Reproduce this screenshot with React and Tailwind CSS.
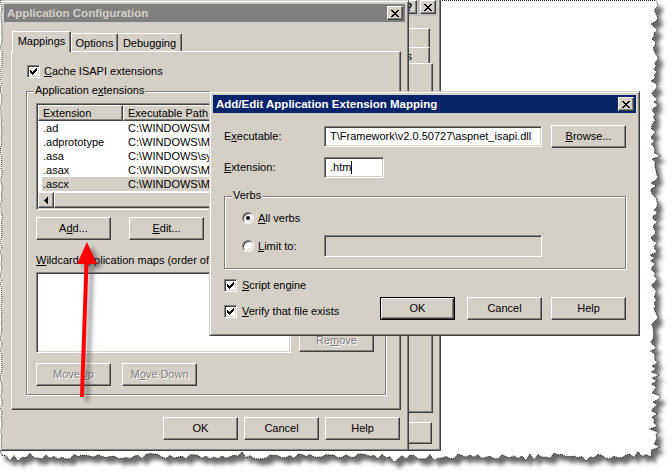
import React from "react";

// classic win2000 bevels
const raised =
  "border border-t-white border-l-white border-r-[#404040] border-b-[#404040] shadow-[inset_-1px_-1px_0_#808080]";
const sunken =
  "border border-t-[#808080] border-l-[#808080] border-r-white border-b-white shadow-[inset_1px_1px_0_#404040,inset_-1px_-1px_0_#D4D0C8]";
const etched = "border border-[#808080] shadow-[inset_1px_1px_0_#fff,1px_1px_0_#fff]";
const frame =
  "border border-t-[#D4D0C8] border-l-[#D4D0C8] border-r-[#404040] border-b-[#404040] shadow-[inset_1px_1px_0_#fff,inset_-1px_-1px_0_#808080] p-[3px]";
const greyed = "text-[#808080] [text-shadow:1px_1px_0_#fff]";

function makeRng(seed) {
  let s = seed;
  return () => {
    s = (s * 16807) % 2147483647;
    return s / 2147483647;
  };
}

const rnd = makeRng(4242);
const pts = [[0, 0.5], [656, 0.5]];
for (let y = 3; y < 452; y += 3) {
  const spike = rnd() < 0.15 ? (rnd() - 0.5) * 9 : 0;
  pts.push([651 + rnd() * 7 + spike, y]);
}
pts.push([651, 457]);
for (let x = 646; x > 2; x -= 4) {
  const spike = rnd() < 0.15 ? (rnd() - 0.5) * 8 : 0;
  pts.push([x, 454 + rnd() * 5 + spike]);
}
pts.push([0, 455]);
const PAPER = "M" + pts.map((p) => p[0].toFixed(1) + "," + p[1].toFixed(1)).join(" L") + " Z";

const leftPts = [];
for (let y = 0; y <= 456; y += 4) leftPts.push([0.5 + rnd() * 1.8, y]);
const LEFT_EDGE = "M" + leftPts.map((p) => p[0].toFixed(1) + "," + p[1]).join(" L");
const LEFT_FILL = LEFT_EDGE + " L-2,456 L-2,0 Z";

function TornPaper() {
  return (
    <svg className="absolute left-0 top-0" width="671" height="472">
      <defs>
        <filter id="pblur" x="-5%" y="-5%" width="110%" height="110%">
          <feGaussianBlur stdDeviation="2.2" />
        </filter>
      </defs>
      <path d={PAPER} transform="translate(5,6)" fill="#6a6a6a" filter="url(#pblur)" />
      <path d={PAPER} fill="#fff" stroke="#000" strokeWidth="0.9" strokeDasharray="1 1" />
    </svg>
  );
}

function CloseGlyph() {
  const segs = [
    [0, 0, 2], [6, 0, 2],
    [1, 1, 2], [5, 1, 2],
    [2, 2, 4],
    [3, 3, 2],
    [2, 4, 4],
    [1, 5, 2], [5, 5, 2],
    [0, 6, 2], [6, 6, 2],
  ];
  return (
    <svg width="8" height="7" viewBox="0 0 8 7" shapeRendering="crispEdges">
      {segs.map(([x, y, w], i) => (
        <rect key={i} x={x} y={y} width={w} height="1" fill="#000" />
      ))}
    </svg>
  );
}

function TitleButton({ children }) {
  return (
    <div className={`w-[16px] h-[14px] shrink-0 bg-[#D4D0C8] ${raised} flex items-center justify-center`}>
      {children}
    </div>
  );
}

function TitleBar({ title, active }) {
  return (
    <div
      className={`h-[18px] flex items-center pl-[3px] pr-[2px] ${
        active ? "bg-[#0A246A] text-white" : "bg-[#808080] text-[#D4D0C8]"
      }`}
    >
      <span className="flex-1 font-bold text-[11.5px] whitespace-nowrap">{title}</span>
      <TitleButton>
        <CloseGlyph />
      </TitleButton>
    </div>
  );
}

function Button({ children, disabled, def, w = "w-[75px]", h = "h-[23px]" }) {
  const face = (
    <div
      className={`${def ? "w-full h-full" : `${w} ${h}`} shrink-0 bg-[#D4D0C8] ${raised} flex items-center justify-center whitespace-nowrap ${
        disabled ? greyed : ""
      }`}
    >
      {children}
    </div>
  );
  if (def) return <div className={`${w} ${h} shrink-0 border border-black`}>{face}</div>;
  return face;
}

function Check() {
  const ys = [2, 3, 4, 3, 2, 1, 0];
  return (
    <div className={`w-[13px] h-[13px] shrink-0 bg-white ${sunken} flex items-center justify-center`}>
      <svg width="7" height="7" viewBox="0 0 7 7" shapeRendering="crispEdges">
        {ys.map((y, i) => (
          <rect key={i} x={i} y={y} width="1" height="3" fill="#000" />
        ))}
      </svg>
    </div>
  );
}

function Radio({ on }) {
  return (
    <div className="w-[12px] h-[12px] shrink-0 rounded-full bg-white border border-t-[#808080] border-l-[#808080] border-r-white border-b-white shadow-[inset_1px_1px_0_#404040,inset_-1px_-1px_0_#D4D0C8] flex items-center justify-center">
      {on && <div className="w-[4px] h-[4px] rounded-full bg-black" />}
    </div>
  );
}

function GroupLabel({ children, left = "left-[7px]" }) {
  return (
    <span className={`absolute ${left} top-[-8px] px-[1px] bg-[#D4D0C8] whitespace-nowrap`}>{children}</span>
  );
}

const rows = [
  [".ad", "C:\\WINDOWS\\Microsoft.NET\\Framework\\v2.0.50727\\aspnet_isapi.dll"],
  [".adprototype", "C:\\WINDOWS\\Microsoft.NET\\Framework\\v2.0.50727\\aspnet_isapi.dll"],
  [".asa", "C:\\WINDOWS\\system32\\inetsrv\\asp.dll"],
  [".asax", "C:\\WINDOWS\\Microsoft.NET\\Framework\\v2.0.50727\\aspnet_isapi.dll"],
  [".ascx", "C:\\WINDOWS\\Microsoft.NET\\Framework\\v2.0.50727\\aspnet_isapi.dll"],
];

function BackWindow() {
  return (
    <div className={`absolute left-[340px] top-[-6px] w-[101px] h-[457px] bg-[#D4D0C8] ${frame} flex flex-col`}>
      <div className="h-[18px] bg-[#C0C0C0] flex items-center justify-end gap-[3px] pr-[1px]">
        <TitleButton>
          <span className="font-bold leading-none">?</span>
        </TitleButton>
        <TitleButton>
          <CloseGlyph />
        </TitleButton>
      </div>
      <div className="flex flex-col items-end pt-[12px]">
        <div className="mr-[7px] w-[60px] h-[19px] border-t border-r border-t-white border-r-[#404040] shadow-[inset_-1px_0_0_#808080]" />
        <div className="mr-[7px] w-[60px] h-[16px] border-t border-r border-t-white border-r-[#404040] shadow-[inset_-1px_0_0_#808080] text-right pr-[17px] pt-[2px]">
          s
        </div>
        <div className="mr-[4px] w-[80px] h-[350px] border-t border-r border-b border-t-white border-r-[#404040] border-b-[#404040] shadow-[inset_-1px_-1px_0_#808080]" />
        <div className="mt-[9px] mr-[5px]">
          <Button h="h-[22px]" />
        </div>
      </div>
    </div>
  );
}

function AppConfig() {
  return (
    <div className={`absolute left-0 top-0 w-[409px] h-[451px] bg-[#D4D0C8] ${frame} flex flex-col`}>
      <TitleBar title="Application Configuration" />
      <div className="pl-[7px] pt-[9px] flex flex-col">
        {/* tabs */}
        <div className="flex items-end h-[20px]">
          <div className="relative z-10 ml-[1px] -mb-px w-[59px] h-[21px] bg-[#D4D0C8] rounded-t-[2px] border-t border-l border-r border-t-white border-l-white border-r-[#404040] shadow-[inset_-1px_0_0_#808080] flex justify-center pt-[3px]">
            Mappings
          </div>
          <div className="w-[47px] h-[18px] rounded-t-[2px] border-t border-l border-r border-t-white border-l-white border-r-[#404040] shadow-[inset_-1px_0_0_#808080] flex justify-center pt-[3px]">
            Options
          </div>
          <div className="w-[64px] h-[18px] rounded-t-[2px] border-t border-r border-t-white border-r-[#404040] shadow-[inset_-1px_0_0_#808080] flex justify-center pt-[3px]">
            Debugging
          </div>
        </div>

        {/* tab panel */}
        <div className={`w-[390px] h-[359px] ${raised} pt-[13px] pl-[14px] flex flex-col`}>
          <div className="ml-[1px] flex items-center h-[13px]">
            <Check />
            <span className="ml-[4px] whitespace-nowrap">
              <u>C</u>ache ISAPI extensions
            </span>
          </div>

          <div className={`relative mt-[13px] w-[360px] h-[304px] ${etched} pl-[9px] pt-[11px] flex flex-col`}>
            <GroupLabel>
              Application e<u>x</u>tensions
            </GroupLabel>

            {/* list view */}
            <div className={`w-[340px] h-[107px] bg-white ${sunken} p-px flex flex-col overflow-hidden`}>
              <div className="flex h-[16px] shrink-0">
                <div className={`w-[85px] ${raised} bg-[#D4D0C8] pl-[4px] flex items-center`}>Extension</div>
                <div className={`flex-1 ${raised} bg-[#D4D0C8] pl-[4px] flex items-center whitespace-nowrap`}>
                  Executable Path
                </div>
              </div>
              {rows.map(([ext, path], i) => (
                <div key={ext} className="h-[14px] pl-[4px] flex">
                  <div className={`flex-1 flex items-center ${i === 4 ? "bg-[#D4D0C8]" : ""}`}>
                    <span className="w-[81px] pl-[1px] whitespace-nowrap">{ext}</span>
                    <span className="pl-[5px] whitespace-nowrap">{path}</span>
                  </div>
                </div>
              ))}
              <div className="flex-1" />
              <div className="h-[16px] flex shrink-0 bg-[#D4D0C8]">
                <div className={`w-[16px] h-[16px] ${raised} bg-[#D4D0C8] flex items-center justify-center`}>
                  <svg width="4" height="7" viewBox="0 0 4 7" shapeRendering="crispEdges">
                    <rect x="0" y="3" width="1" height="1" fill="#000" />
                    <rect x="1" y="2" width="1" height="3" fill="#000" />
                    <rect x="2" y="1" width="1" height="5" fill="#000" />
                    <rect x="3" y="0" width="1" height="7" fill="#000" />
                  </svg>
                </div>
                <div className={`w-[220px] h-[16px] ${raised} bg-[#D4D0C8]`} />
              </div>
            </div>

            <div className="mt-[7px] flex gap-[18px]">
              <Button>
                A<u>d</u>d...
              </Button>
              <Button>
                <u>E</u>dit...
              </Button>
              <Button>Remove</Button>
            </div>

            <div className="mt-[14px] whitespace-nowrap">
              <u>W</u>ildcard application maps (order of implementation):
            </div>

            <div className="mt-[5px] flex items-end">
              <div className={`w-[255px] h-[81px] bg-white ${sunken}`} />
              <div className="ml-[8px] mb-px">
                <Button disabled>
                  Re<u>m</u>ove
                </Button>
              </div>
            </div>

            <div className="mt-[10px] flex gap-[11px]">
              <Button disabled>
                Move <u>U</u>p
              </Button>
              <Button disabled>
                M<u>o</u>ve Down
              </Button>
            </div>
          </div>
        </div>

        <div className="w-[390px] mt-[7px] pr-[1px] flex justify-end gap-[6px]">
          <Button>OK</Button>
          <Button>Cancel</Button>
          <Button>Help</Button>
        </div>
      </div>
    </div>
  );
}

function MappingDialog() {
  return (
    <div className={`absolute left-[209px] top-[91px] w-[431px] h-[245px] bg-[#D4D0C8] ${frame} flex flex-col`}>
      <TitleBar title="Add/Edit Application Extension Mapping" active />
      <div className="pl-[11px] pt-[12px] flex flex-col">
        <div className="h-[23px] flex items-center">
          <span className="w-[100px]">
            E<u>x</u>ecutable:
          </span>
          <div className={`w-[218px] h-[21px] bg-white ${sunken} pl-[5px] flex items-center whitespace-nowrap overflow-hidden`}>
            T\Framework\v2.0.50727\aspnet_isapi.dll
          </div>
          <div className="ml-[9px]">
            <Button>
              <u>B</u>rowse...
            </Button>
          </div>
        </div>

        <div className="mt-[8px] h-[23px] flex items-center">
          <span className="w-[100px]">
            <u>E</u>xtension:
          </span>
          <div className={`w-[60px] h-[21px] bg-white ${sunken} pl-[5px] flex items-center`}>
            .htm
            <span className="inline-block w-px h-[13px] bg-black" />
          </div>
        </div>

        <div className={`relative mt-[17px] w-[402px] h-[73px] ${etched} pl-[17px] pt-[10px] flex flex-col`}>
          <GroupLabel>Verbs</GroupLabel>
          <div className="h-[22px] flex items-center">
            <Radio on />
            <span className="ml-[4px]">
              <u>A</u>ll verbs
            </span>
          </div>
          <div className="mt-[6px] h-[22px] flex items-center">
            <Radio />
            <span className="ml-[4px] w-[66px]">
              <u>L</u>imit to:
            </span>
            <div className={`w-[218px] h-[22px] bg-[#D4D0C8] ${sunken}`} />
          </div>
        </div>

        <div className="mt-[10px] flex items-start">
          <div className="w-[156px] flex flex-col">
            <div className="h-[13px] flex items-center">
              <Check />
              <span className="ml-[5px] whitespace-nowrap">
                <u>S</u>cript engine
              </span>
            </div>
            <div className="mt-[13px] h-[13px] flex items-center">
              <Check />
              <span className="ml-[5px] whitespace-nowrap">
                <u>V</u>erify that file exists
              </span>
            </div>
          </div>
          <div className="mt-[18px] flex">
            <Button def>OK</Button>
            <div className="ml-[12px]">
              <Button>Cancel</Button>
            </div>
            <div className="ml-[9px]">
              <Button>Help</Button>
            </div>
          </div>
        </div>
      </div>
    </div>
  );
}

function Arrow() {
  return (
    <svg className="absolute left-0 top-0 pointer-events-none" width="140" height="420">
      <defs>
        <filter id="ablur" x="-100%" y="-20%" width="300%" height="140%">
          <feGaussianBlur stdDeviation="2" />
        </filter>
      </defs>
      <g transform="translate(5,4)" fill="#404040" opacity="0.55" filter="url(#ablur)">
        <polygon points="84.5,262 88.5,262 84,397 80,397" />
        <polygon points="87,242 97,264 77,264" />
      </g>
      <g fill="#FF0000">
        <polygon points="84.5,262 88.5,262 84,397 80,397" />
        <polygon points="87,242 97,264 77,264" />
      </g>
    </svg>
  );
}

function LeftTear() {
  return (
    <svg className="absolute left-0 top-0 pointer-events-none" width="6" height="460">
      <path d={LEFT_FILL} fill="#fff" />
      <path d={LEFT_EDGE} fill="none" stroke="#000" strokeWidth="0.9" strokeDasharray="1 1" />
    </svg>
  );
}

export default function App() {
  return (
    <div className="relative w-[671px] h-[472px] overflow-hidden bg-white font-['Liberation_Sans',Arial,sans-serif] text-[11px] leading-[13px] text-black">
      <TornPaper />
      <BackWindow />
      <AppConfig />
      <MappingDialog />
      <Arrow />
      <LeftTear />
    </div>
  );
}
